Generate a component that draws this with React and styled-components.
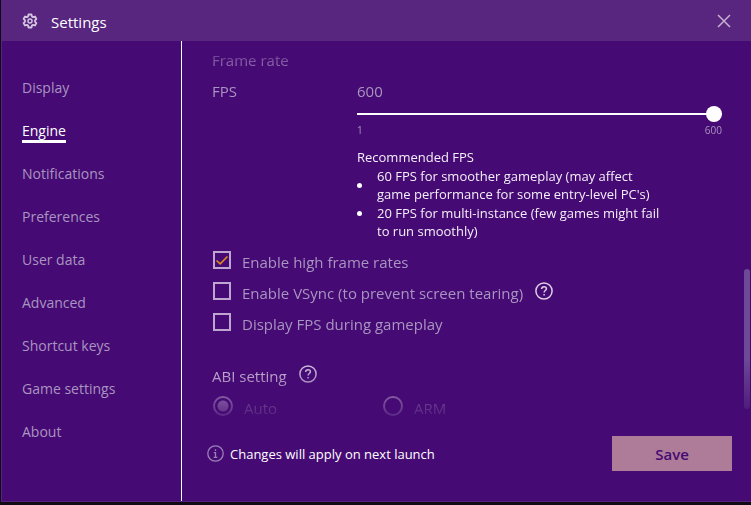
import React, { useState } from "react";
import styled, { createGlobalStyle } from "styled-components";

const GlobalStyle = createGlobalStyle`
  * { box-sizing: border-box; }
  body {
    margin: 0;
    background: #100a14;
    font-family: "Open Sans", "Noto Sans", sans-serif;
  }
  button, input { font: inherit; margin: 0; }
`;

const muted = "#a995c1";

const Dialog = styled.div`
  display: flex;
  flex-direction: column;
  height: 100vh;
  min-height: 480px;
  padding: 0 0 3px 1px;
`;

const TitleBar = styled.header`
  display: flex;
  align-items: center;
  flex: none;
  height: 41px;
  padding: 0 20px 0 21px;
  background: #58257f;
`;

const Title = styled.h1`
  flex: 1;
  margin: 3px 0 0 13px;
  font-size: 15px;
  line-height: 20px;
  font-weight: 400;
  color: #fff;
`;

const CloseButton = styled.button`
  display: flex;
  padding: 0;
  border: 0;
  background: none;
  color: #c5b0d2;
`;

const Body = styled.div`
  display: flex;
  flex: 1;
  min-height: 0;
  background: #450a73;
  border-left: 1px solid #552382;
  border-bottom: 1px solid #552382;
`;

const Sidebar = styled.nav`
  display: flex;
  flex-direction: column;
  align-items: flex-start;
  flex: none;
  gap: 17px;
  width: 180px;
  padding: 33px 20px;
  border-right: 1px solid #fff;
`;

const NavLink = styled.a`
  height: 26px;
  font-size: 14px;
  line-height: 27px;
  color: ${(p) => (p.$active ? "#fff" : muted)};
  text-decoration: none;
  border-bottom: 3px solid ${(p) => (p.$active ? "#fff" : "transparent")};
  white-space: nowrap;
`;

const Main = styled.main`
  display: flex;
  flex-direction: column;
  flex: 1;
  min-width: 0;
`;

const ScrollArea = styled.div`
  position: relative;
  flex: 1;
  min-height: 0;
  overflow: hidden;
  padding: 9px 29px 0 30px;
  mask-image: linear-gradient(to bottom, transparent 0, #000 40px, #000 318px, transparent 388px);
`;

const ScrollThumb = styled.div`
  position: absolute;
  top: 228px;
  right: 1px;
  width: 6px;
  height: 140px;
  border-radius: 3px;
  background: #6c4a97;
`;

const SectionTitle = styled.h2`
  margin: 0;
  font-size: 15px;
  line-height: 20px;
  font-weight: 400;
  color: ${(p) => (p.$bright ? "#dccfe6" : "#b9a3cb")};
`;

const FpsRow = styled.div`
  display: grid;
  grid-template-columns: 145px 1fr;
  margin-top: 11px;
  font-size: 15px;
  line-height: 20px;
  color: ${muted};
`;

const Slider = styled.input`
  display: block;
  width: 100%;
  height: 16px;
  margin-top: 5px;
  appearance: none;
  background: linear-gradient(#fff, #fff) center / 100% 2px no-repeat;

  &::-webkit-slider-thumb {
    appearance: none;
    width: 16px;
    height: 16px;
    border-radius: 50%;
    background: #fff;
  }
`;

const Scale = styled.div`
  display: flex;
  justify-content: space-between;
  font-size: 10px;
  line-height: 16px;
`;

const Advice = styled.div`
  margin-top: 10px;
  font-size: 13px;
  line-height: 18px;
  color: #f4eff8;
`;

const AdviceList = styled.ul`
  display: grid;
  gap: 1px;
  margin: 1px 0 0;
  padding: 0;
  list-style: none;
`;

const AdviceItem = styled.li`
  display: flex;
  align-items: ${(p) => (p.$centred ? "center" : "flex-start")};
  gap: 15px;
  max-width: 311px;

  &::before {
    content: "";
    flex: none;
    width: 5px;
    height: 5px;
    margin: ${(p) => (p.$centred ? "0" : "7px 0 0")};
    border-radius: 50%;
    background: #fff;
  }
`;

const Options = styled.div`
  display: grid;
  gap: 11px;
  margin-top: 10px;
`;

const OptionRow = styled.div`
  display: flex;
  align-items: center;
  gap: 12px;
  height: 20px;
`;

const OptionLabel = styled.label`
  display: flex;
  align-items: center;
  gap: 11px;
  height: 20px;
  font-size: 15px;
  line-height: 20px;
  color: ${muted};
  white-space: nowrap;
`;

const LabelText = styled.span`
  padding-top: 3px;
`;

const CheckWrap = styled.span`
  display: grid;
  width: 18px;
  height: 18px;
  margin-left: 1px;

  > * { grid-area: 1 / 1; }
`;

const Checkbox = styled.input`
  appearance: none;
  width: 18px;
  height: 18px;
  border: 2px solid #bfa6d0;
`;

const AbiRow = styled.div`
  display: flex;
  align-items: center;
  gap: 12px;
  height: 20px;
  margin-top: 32px;
`;

const AbiTitle = styled(SectionTitle)`
  padding-top: 3px;
`;

const RadioGroup = styled.div`
  display: grid;
  grid-template-columns: 170px 1fr;
  margin-top: 12px;
`;

const Radio = styled.input`
  appearance: none;
  width: 20px;
  height: 20px;
  margin-left: 1px;
  border: 2px solid #c9b6d8;
  border-radius: 50%;
  background: ${(p) => (p.checked ? "radial-gradient(circle, #c9b6d8 5px, transparent 6px)" : "none")};
`;

const Footer = styled.footer`
  display: flex;
  align-items: center;
  justify-content: space-between;
  flex: none;
  padding: 0 19px 30px 25px;
`;

const Notice = styled.p`
  display: flex;
  align-items: center;
  gap: 6px;
  margin: 0;
  font-size: 13px;
  line-height: 18px;
  color: #fff;
`;

const SaveButton = styled.button`
  width: 120px;
  height: 35px;
  padding: 0;
  border: 0;
  background: #ae7b98;
  color: #450a73;
  font-size: 15px;
  font-weight: 600;
`;

const HelpButton = styled.button`
  display: flex;
  padding: 0;
  border: 0;
  background: none;
  color: #dccfe6;
`;

function GearIcon() {
  return (
    <svg width="16" height="16" viewBox="0 0 16 16" fill="none" stroke="#d5c6e0" strokeWidth="1.8" strokeLinejoin="round">
      <path d="M6.500 1.500h3l.4 1.900 1.200.7 1.900-.6 1.400 2.400-1.400 1.400v1.400l1.400 1.400-1.400 2.400-1.900-.6-1.200.7-.4 1.900h-3l-.4-1.900-1.200-.7-1.900.6-1.400-2.400L3 8.700V7.300L1.600 5.900 3 3.500l1.900.6 1.200-.7z" />
      <circle cx="8" cy="8" r="2" strokeWidth="1.500" />
    </svg>
  );
}

function HelpIcon() {
  return (
    <svg width="18" height="18" viewBox="0 0 18 18" fill="none" stroke="currentColor" strokeWidth="1.5">
      <circle cx="9" cy="9" r="8.100" />
      <path d="M6.600 7c.1-1.500 1.100-2.300 2.400-2.300s2.400.8 2.400 2.100c0 1.700-2.300 1.800-2.300 3.700" />
      <path d="M9.100 12v1.600" />
    </svg>
  );
}

function InfoIcon() {
  return (
    <svg width="17" height="17" viewBox="0 0 17 17" fill="none" stroke="#9a80b8" strokeWidth="1.300">
      <circle cx="8.500" cy="8.500" r="7.700" />
      <path d="M8.500 4.300v1.700M6.800 7.700h1.700v4.600M6.600 12.300h3.800" />
    </svg>
  );
}

const sections = [
  "Display", "Engine", "Notifications", "Preferences", "User data",
  "Advanced", "Shortcut keys", "Game settings", "About",
];

function CheckOption({ label, initial = false, help }) {
  const [on, setOn] = useState(initial);
  return (
    <OptionRow>
      <OptionLabel>
        <CheckWrap>
          <Checkbox type="checkbox" checked={on} onChange={(e) => setOn(e.target.checked)} />
          {on && (
            <svg width="18" height="18" viewBox="0 0 18 18" fill="none" stroke="#e08a1c" strokeWidth="1.600" pointerEvents="none">
              <path d="M3.500 9.500 7.200 12.800 14.500 5.500" />
            </svg>
          )}
        </CheckWrap>
        <LabelText>{label}</LabelText>
      </OptionLabel>
      {help && <HelpButton aria-label="About VSync"><HelpIcon /></HelpButton>}
    </OptionRow>
  );
}

export default function App() {
  const [active, setActive] = useState("Engine");
  const [fps, setFps] = useState(600);
  const [abi, setAbi] = useState("Auto");

  return (
    <>
      <GlobalStyle />
      <Dialog>
        <TitleBar>
          <GearIcon />
          <Title>Settings</Title>
          <CloseButton aria-label="Close">
            <svg width="14" height="14" viewBox="0 0 14 14" stroke="currentColor" strokeWidth="1.500">
              <path d="M1 1l12 12M13 1L1 13" />
            </svg>
          </CloseButton>
        </TitleBar>
        <Body>
          <Sidebar>
            {sections.map((name) => (
              <NavLink key={name} href="#" $active={name === active} onClick={() => setActive(name)}>
                {name}
              </NavLink>
            ))}
          </Sidebar>
          <Main>
            <ScrollArea>
              <SectionTitle>Frame rate</SectionTitle>
              <FpsRow>
                <label htmlFor="fps">FPS</label>
                <div>
                  <output htmlFor="fps">{fps}</output>
                  <Slider id="fps" type="range" min="1" max="600" value={fps} onChange={(e) => setFps(e.target.value)} />
                  <Scale><span>1</span><span>600</span></Scale>
                  <Advice>
                    Recommended FPS
                    <AdviceList>
                      <AdviceItem $centred>
                        <span>60 FPS for smoother gameplay (may affect game performance for some entry-level PC's)</span>
                      </AdviceItem>
                      <AdviceItem>
                        <span>20 FPS for multi-instance (few games might fail to run smoothly)</span>
                      </AdviceItem>
                    </AdviceList>
                  </Advice>
                </div>
              </FpsRow>
              <Options>
                <CheckOption label="Enable high frame rates" initial />
                <CheckOption label="Enable VSync (to prevent screen tearing)" help />
                <CheckOption label="Display FPS during gameplay" />
              </Options>
              <AbiRow>
                <AbiTitle $bright>ABI setting</AbiTitle>
                <HelpButton aria-label="About ABI setting"><HelpIcon /></HelpButton>
              </AbiRow>
              <RadioGroup>
                {["Auto", "ARM"].map((name) => (
                  <OptionLabel key={name}>
                    <Radio type="radio" name="abi" checked={abi === name} onChange={() => setAbi(name)} />
                    <LabelText>{name}</LabelText>
                  </OptionLabel>
                ))}
              </RadioGroup>
              <ScrollThumb />
            </ScrollArea>
            <Footer>
              <Notice><InfoIcon />Changes will apply on next launch</Notice>
              <SaveButton>Save</SaveButton>
            </Footer>
          </Main>
        </Body>
      </Dialog>
    </>
  );
}
